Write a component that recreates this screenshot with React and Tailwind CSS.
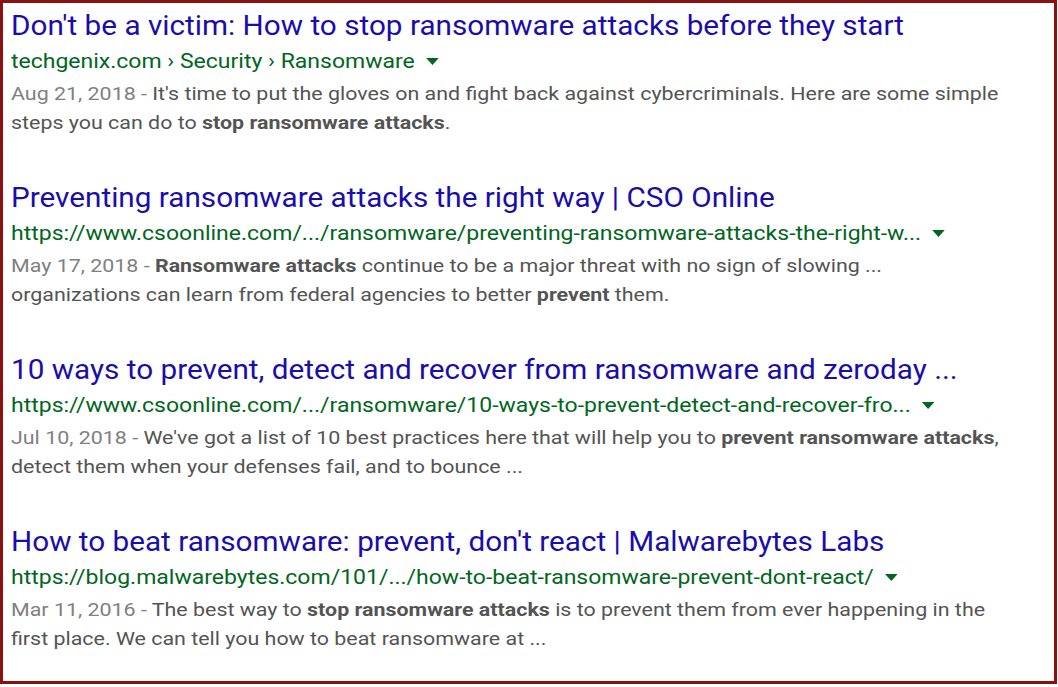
const results = [
  {
    title: "Don't be a victim: How to stop ransomware attacks before they start",
    url: "techgenix.com › Security › Ransomware",
    date: "Aug 21, 2018",
    lines: [
      ["It's time to put the gloves on and fight back against cybercriminals. Here are some simple"],
      ["steps you can do to ", { b: "stop ransomware attacks" }, "."],
    ],
  },
  {
    title: "Preventing ransomware attacks the right way | CSO Online",
    url: "https://www.csoonline.com/.../ransomware/preventing-ransomware-attacks-the-right-w...",
    date: "May 17, 2018",
    lines: [
      [{ b: "Ransomware attacks" }, " continue to be a major threat with no sign of slowing ..."],
      ["organizations can learn from federal agencies to better ", { b: "prevent" }, " them."],
    ],
  },
  {
    title: "10 ways to prevent, detect and recover from ransomware and zeroday ...",
    url: "https://www.csoonline.com/.../ransomware/10-ways-to-prevent-detect-and-recover-fro...",
    date: "Jul 10, 2018",
    lines: [
      ["We've got a list of 10 best practices here that will help you to ", { b: "prevent ransomware attacks" }, ","],
      ["detect them when your defenses fail, and to bounce ..."],
    ],
  },
  {
    title: "How to beat ransomware: prevent, don't react | Malwarebytes Labs",
    url: "https://blog.malwarebytes.com/101/.../how-to-beat-ransomware-prevent-dont-react/",
    date: "Mar 11, 2016",
    lines: [
      ["The best way to ", { b: "stop ransomware attacks" }, " is to prevent them from ever happening in the"],
      ["first place. We can tell you how to beat ransomware at ..."],
    ],
  },
];

function Piece({ s }) {
  if (typeof s === "string") return <span>{s}</span>;
  return <b className="font-bold">{s.b}</b>;
}

function Result({ r }) {
  return (
    <div className="mb-[44px]">
      <div className="origin-left scale-x-[1.1] text-[27px] leading-[34px] text-[#1a0dab] whitespace-nowrap">
        {r.title}
      </div>
      <div className="origin-left scale-x-[1.15] flex items-center text-[20px] leading-[36px] text-[#006621] whitespace-nowrap">
        <span>{r.url}</span>
        <svg className="ml-[10px]" width="11" height="7" viewBox="0 0 11 7">
          <path d="M0 0h11L5.5 7z" fill="#006621" />
        </svg>
      </div>
      <div className="origin-left scale-x-[1.127] text-[19px] leading-[29px] text-[#545454] whitespace-nowrap">
        {r.lines.map((line, i) => (
          <div key={i}>
            {i === 0 && <span className="text-[#808080]">{r.date} - </span>}
            {line.map((s, j) => (
              <Piece key={j} s={s} />
            ))}
          </div>
        ))}
      </div>
    </div>
  );
}

export default function App() {
  return (
    <div className="bg-white w-[1058px] h-[687px]" style={{ fontFamily: "Roboto, Arial, sans-serif" }}>
      <div className="w-[1057px] h-[684px] border-[3px] border-[#8b1010] pl-[8px] pt-[6px] overflow-hidden">
        {results.map((r, i) => (
          <Result key={i} r={r} />
        ))}
      </div>
    </div>
  );
}
